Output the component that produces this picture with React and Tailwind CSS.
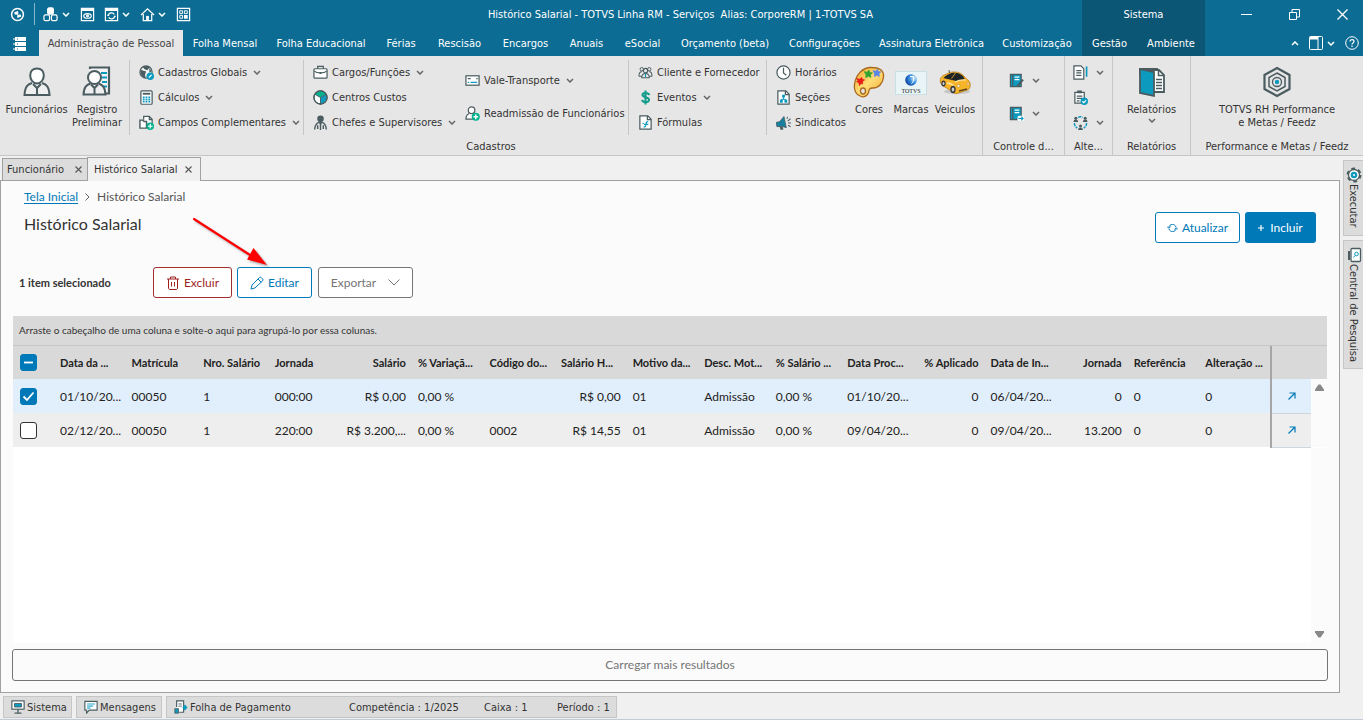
import React from "react";
import clsx from "clsx";

const INK = "#4a5c60";
const TEAL = "#0c9abe";
const GREEN = "#00b28e";

const Svg = ({ size = 15, box = 16, className, children }) => (
    <svg
        width={size}
        height={size}
        viewBox={`0 0 ${box} ${box}`}
        fill="none"
        stroke={INK}
        strokeWidth="1.3"
        className={clsx("shrink-0", className)}
        aria-hidden="true"
    >
        {children}
    </svg>
);

const Chevron = ({ className = "text-[#666666]", up = false }) => (
    <svg width="8" height="5" viewBox="0 0 8 5" fill="none" stroke="currentColor" strokeWidth="1.5" className={clsx("shrink-0", className)} aria-hidden="true">
        <path d={up ? "M1 4l3-3 3 3" : "M1 1l3 3 3-3"} />
    </svg>
);

/* ---------- ribbon icons ---------- */

const PersonIcon = () => (
    <Svg size={32} box={32}>
        <g strokeWidth="2" fill="#fff">
            <path d="M11 17c-4 1.500-7 3-7.500 12h25c-.5-9-3.500-10.500-7.500-12" fill="#efefef" />
            <path d="M12 18l4 4 4-4M16 22v6" fill="none" />
            <path d="M16 2.500c4.500 0 6.800 3 6.800 7s-2.800 8-6.800 8-6.800-4-6.800-8 2.300-7 6.800-7z" />
        </g>
    </Svg>
);

const RegistryIcon = () => (
    <Svg size={32} box={32}>
        <path d="M9 3V1.500h19v26h-6" strokeWidth="2.200" fill="#f4f4f4" />
        <path d="M20 7h6M21 11.500h5M21 16h5M22 20.500h4" stroke={TEAL} strokeWidth="2" />
        <g strokeWidth="2">
            <path d="M9.500 17.500c-4 1.500-6.500 3-7 11h22c-.5-8-3-9.500-7-11" fill="#efefef" />
            <path d="M10 18.500l3.500 3.500 3.500-3.500M13.500 22v6" />
            <circle cx="13.500" cy="11.500" r="6.500" fill="#fff" />
        </g>
    </Svg>
);

const GlobeIcon = () => (
    <Svg>
        <circle cx="7.500" cy="7.500" r="6.500" fill="#f4f4f4" />
        <path d="M1.500 5c3 .5 3.500 1.500 5.500 1.500 1 1.500-.5 2.500-.5 4s.5 2 .5 3.500c-3-.500-6-4-5.500-9zM4 2c2-1.500 6-1 7.500 0L9 5.500 6 4.500z" fill={INK} stroke="none" />
        <path d="M11 3l2.500 4-2.500 1z" fill={INK} stroke="none" />
        <circle cx="12" cy="12" r="4" fill={TEAL} stroke="none" />
        <path d="M10.500 13.500l3-3" stroke="#fff" />
    </Svg>
);

const CalculatorIcon = () => (
    <Svg>
        <rect x="2" y="1" width="12" height="14.200" rx="1" fill="#fff" />
        <rect x="4" y="3" width="8" height="2" fill={INK} stroke="none" />
        <path d="M5 7v6.500M8 7v6.500M11 7v6.500" stroke={TEAL} strokeWidth="2" strokeDasharray="1.800 .5" />
    </Svg>
);

const FieldsIcon = () => (
    <Svg>
        <path d="M5 5V1.500h6l3 3V10M11 1.500V5h3" fill="#fff" />
        <path d="M1 5.500h3l1.500 1.500H8V14H1z" fill="#fff" strokeWidth="1.500" />
        <circle cx="12" cy="12" r="4" fill={GREEN} stroke="none" />
        <path d="M12 9.500v5M9.500 12h5" stroke="#fff" />
    </Svg>
);

const BriefcaseIcon = () => (
    <Svg>
        <path d="M5 4V1.500h6V4" />
        <rect x="1" y="4" width="14" height="10" rx="1" fill="#fff" />
        <path d="M1.500 6.500C4 9 12 9 14.500 6.500" />
        <path d="M7 8.500h2" strokeWidth="2" />
    </Svg>
);

const PieIcon = () => (
    <Svg>
        <circle cx="8" cy="8" r="7" fill="#fff" />
        <path d="M8 8L2 4.500C5 0 11 0 14 4.500z" fill={GREEN} stroke="none" />
        <path d="M8 8l6-3.500c2 4 0 9-6 10.300z" fill={TEAL} stroke="none" />
        <circle cx="8" cy="8" r="7" />
        <path d="M8 8v7M8 8L2 4.500M8 8l6-3.500" strokeWidth="1" />
    </Svg>
);

const SupervisorIcon = () => (
    <Svg>
        <circle cx="8" cy="4" r="3.500" fill={INK} stroke="none" />
        <path d="M8 7v9M6.500 7.500C3 9 2 11 1.800 15.500M9.500 7.500c3.500 1.500 4.500 3.500 4.700 8M5 11v4M11 11v4" strokeWidth="1.500" />
        <path d="M6 7h4l-2 5z" fill={INK} stroke="none" />
    </Svg>
);

const TicketIcon = () => (
    <Svg>
        <rect x="1" y="3" width="14" height="10" fill="#fff" />
        <path d="M3 6h3M12 6h1.500" strokeWidth="1.500" />
        <path d="M3 10h1.500M6 10h7" stroke={TEAL} strokeWidth="1.500" />
    </Svg>
);

const RehireIcon = () => (
    <Svg>
        <circle cx="7" cy="4.500" r="3.500" fill="#fff" />
        <path d="M4.500 8C2 9 1 11 1 14h8" fill="#fff" />
        <circle cx="11.500" cy="11.500" r="4.300" fill={GREEN} stroke="none" />
        <path d="M11.500 9v5M9 11.500h5" stroke="#fff" strokeWidth="1.500" />
    </Svg>
);

const PeopleIcon = () => (
    <Svg>
        <circle cx="8" cy="6" r="2.300" />
        <circle cx="4" cy="4.500" r="1.800" strokeWidth="1" />
        <circle cx="12" cy="4.500" r="1.800" strokeWidth="1" />
        <path d="M4 13.500c0-3 1.500-4.500 4-4.500s4 1.500 4 4.500zM1 12c0-3 .5-4.500 3-5M15 12c0-3-.5-4.500-3-5M1 12h3M12 12h3" strokeWidth="1.100" />
        <path d="M8 9v4" stroke={TEAL} />
    </Svg>
);

const DollarIcon = () => (
    <Svg>
        <path d="M12 5.500C11.500 3 5 2 4.800 5c0 3.500 7 2 7 5.500 0 3.500-7 3-7.500 0M8 .5v15" stroke="#139c8c" strokeWidth="2.200" />
    </Svg>
);

const FormulaIcon = () => (
    <Svg>
        <path d="M2 1h8.500L14 4.500V15H2z" fill="#fff" />
        <path d="M10 1v4h4" />
        <path d="M11 7.500c-1.500-.8-2.200 0-2.400 1.500l-.4 2c-.3 1.500-.9 2-2.200 1.500M6.500 10h4.500" stroke={TEAL} strokeWidth="1.300" />
        <circle cx="5.500" cy="9" r=".8" fill={TEAL} stroke="none" />
    </Svg>
);

const ClockIcon = () => (
    <Svg>
        <circle cx="8" cy="8" r="7" fill="#fff" />
        <path d="M8 3v5.500l3 2.500" />
    </Svg>
);

const SectionIcon = () => (
    <Svg>
        <path d="M2 1h8.500L14 4.500V15H2z" fill="#fff" />
        <path d="M10 1v4h4" />
        <path d="M8 7v3M5.500 12v-2h5v2" stroke={TEAL} strokeWidth="1" />
        <path d="M6.500 5h3v3h-3zM4.200 10.500h3v3h-3zM9 10.500h3v3H9z" fill={TEAL} stroke="none" />
    </Svg>
);

const MegaphoneIcon = () => (
    <Svg>
        <path d="M0 8l4-1L8.500 1.500l2.500 12L6 12l-5 .5z" fill="#16819f" stroke={INK} strokeWidth=".8" />
        <path d="M4 12l3 .5.500 3H5z" fill={INK} strokeWidth=".5" />
        <path d="M11.500 4l1-2M12.500 6.500l3-2.500M13 8.500h3M13 11l2.500 1.500" strokeWidth="1.100" />
    </Svg>
);

const PaletteIcon = () => (
    <Svg size={32} box={32}>
        <defs>
            <linearGradient id="palette" x1="0" y1="0" x2="1" y2="1">
                <stop offset="0" stopColor="#f5a32a" />
                <stop offset=".5" stopColor="#fedd78" />
                <stop offset="1" stopColor="#f3a52e" />
            </linearGradient>
        </defs>
        <path
            d="M18 1.500c9 0 13 3 12.500 9.500C30 17 26 22 20 22c-4 0-4 2-4.500 4.500C14.500 30 11 31.500 8 30.500 3 29 .500 24 1.500 18 3 9 9 1.500 18 1.500z"
            fill="url(#palette)"
            stroke="#a8681c"
        />
        <ellipse cx="10" cy="25" rx="2.500" ry="3" fill="#e6e6e6" stroke="#a8681c" />
        <path d="M3.500 12.500l3 .7 2.300-1.700.5 2 2.200.3-2 2 .2 2-1.800-.3-1.400 2-.8-3-2-.7 1.200-1.300z" fill="#ea1c15" stroke="#d9251d" strokeWidth=".8" />
        <path d="M11 5.500l3 .7L16 4l.8 2.500 2.700.3-2 2 .4 2.700-2.600-1.200-2.600 1.400.3-3z" fill="#2fa530" stroke="#2fa530" strokeWidth=".6" />
        <path d="M20 4.500l2.700.7L24.500 3l.8 2.500 2.700.3-2 2 .4 2.700-2.600-1.200-2.600 1.400.3-3z" fill="#5a84e8" stroke="#5a84e8" strokeWidth=".6" />
    </Svg>
);

const BrandIcon = () => (
    <svg width="32" height="32" viewBox="0 0 32 32" className="shrink-0" aria-hidden="true">
        <defs>
            <radialGradient id="orb" cx=".75" cy=".35" r=".8">
                <stop offset="0" stopColor="#d9f0ff" />
                <stop offset=".45" stopColor="#3b93e0" />
                <stop offset="1" stopColor="#0b3c9c" />
            </radialGradient>
        </defs>
        <rect x=".5" y="5.500" width="31" height="23" fill="#e8f4f6" stroke="#c9dfe6" />
        <circle cx="16" cy="14" r="5.800" fill="url(#orb)" />
        <path d="M15 10.500h3.500v3c0 2-.5 3-2 4" fill="none" stroke="#fff" strokeWidth="1" />
        <text x="16" y="26.500" textAnchor="middle" fontSize="6" fontFamily="'Liberation Serif', serif" fill="#222">TOTVS</text>
    </svg>
);

const CarIcon = () => (
    <svg width="32" height="32" viewBox="0 0 32 32" className="shrink-0" aria-hidden="true">
        <ellipse cx="18" cy="25.500" rx="13" ry="2.500" fill="#c6c6c6" />
        <path d="M1.500 12.500C3 9.500 5 9 7.500 8 12 5 20 5 24.500 9.500l3 3.500c3 1.500 4 4 3.700 7-.200 2.500-1.200 3.500-3 4L18 27.500c-2 .5-3 0-4-1.500l-9-5.500c-3-1.500-4.500-5-3.500-8z" fill="#f8b52a" stroke="#b47710" strokeWidth=".7" />
        <path d="M4.500 12.500c1-2.500 4-4 8-5.500 4-1 8.500 0 11.500 3l2 3.500-10 1.500z" fill="#1f2427" />
        <path d="M12.500 12.500l4-5.500M5 12.700l11 2.500" stroke="#f8b52a" fill="none" strokeWidth=".8" />
        <path d="M16 16c4-2 7-2.500 10.500-2M8 17c5 .5 6.500 2 8 4.500" stroke="#fde7a6" strokeWidth="1.300" fill="none" />
        <ellipse cx="4.500" cy="17.500" rx="2.200" ry="3" fill="#3a3a3a" />
        <ellipse cx="14" cy="23.500" rx="2.700" ry="3.700" fill="#3a3a3a" />
        <ellipse cx="14" cy="23.500" rx="1.300" ry="2" fill="#d0d0d0" />
        <ellipse cx="4.500" cy="17.500" rx="1" ry="1.600" fill="#d0d0d0" />
        <circle cx="19.500" cy="20" r="1.500" fill="#fff7dc" stroke="#b47710" strokeWidth=".5" />
        <circle cx="29" cy="18" r="1.200" fill="#fff7dc" stroke="#b47710" strokeWidth=".5" />
        <path d="M20 25l8-2" stroke="#5f4a15" strokeWidth="1.500" />
        <path d="M10 4l.500 3" stroke="#333" strokeWidth=".8" />
    </svg>
);

const BookEditIcon = () => (
    <Svg>
        <path d="M1.500 1.500h11.500v13H1.500z" fill={TEAL} />
        <path d="M4 1.500v13" />
        <path d="M6 4.500h5M6 7h5" stroke="#fff" />
        <path d="M9 14l6-7" strokeWidth="2.200" />
    </Svg>
);

const BookArrowIcon = () => (
    <Svg>
        <path d="M1.500 1.500h11.500v13H1.500z" fill={TEAL} />
        <path d="M4 1.500v13" />
        <path d="M6 4.500h5M6 7h5" stroke="#fff" />
        <rect x="9" y="10.500" width="7" height="5.500" rx="2" fill="#fff" stroke="none" />
        <path d="M10 13.300h5M13 11.300l2 2-2 2" stroke={TEAL} strokeWidth="1.200" />
    </Svg>
);

const DocumentIcon = () => (
    <Svg>
        <path d="M1 1h7.500L11.500 4v11H1z" fill="#fff" />
        <path d="M3.500 6h5.500M3.500 8.500h5.500M3.500 11h5.500" />
        <path d="M14.500 1.500v11" stroke={TEAL} strokeWidth="1.800" />
    </Svg>
);

const ClipboardIcon = () => (
    <Svg>
        <path d="M2 2.500h10V14H2z" fill="#fff" />
        <path d="M4.500 2h5" strokeWidth="3" />
        <path d="M4 6.500h6M4 9h6M4 11.500h3" />
        <circle cx="12" cy="12" r="4" fill={TEAL} stroke="none" />
        <path d="M10 12l1.500 1.500L14 11" stroke="#fff" />
    </Svg>
);

const CycleIcon = () => (
    <Svg>
        <path d="M5.500 2.500c1.500-.8 3.500-.8 5 0M14.500 8.500c0 2.500-1 4-3 5.500M1.500 8.500c0 2.500 1 4 3 5.500" stroke={TEAL} strokeWidth="1.600" strokeDasharray="3.500 1" />
        <path d="M.5 7.500c0-3.500 5-3.500 5 0zM10.500 7.500c0-3.500 5-3.500 5 0zM5.500 16c0-3.500 5-3.500 5 0z" fill={INK} stroke="none" />
        <circle cx="3" cy="3.500" r="1.600" fill={INK} stroke="none" />
        <circle cx="13" cy="3.500" r="1.600" fill={INK} stroke="none" />
        <circle cx="8" cy="11.800" r="1.600" fill={INK} stroke="none" />
    </Svg>
);

const ReportsIcon = () => (
    <Svg size={32} box={32}>
        <path d="M4 3h17v5H4z" fill="#3b4c52" strokeWidth="1.800" />
        <path d="M16 4h7l5 5v17H16z" fill="#fff" strokeWidth="1.800" />
        <path d="M22.500 4v5.500H28" strokeWidth="1.500" />
        <path d="M20 13.500h6M20 16.500h6M20 19.500h6M20 22.500h6" />
        <path d="M4 3l14 3v24L4 27z" fill={TEAL} strokeWidth="1.800" />
    </Svg>
);

const HexIcon = () => (
    <Svg size={32} box={32}>
        <path d="M16 2l12.500 7v14L16 30 3.500 23V9z" strokeWidth="2.200" />
        <path d="M16 7l8 4.500v9L16 25l-8-4.500v-9z" strokeWidth="1.500" />
        <circle cx="16" cy="16" r="4.500" />
        <circle cx="16" cy="16" r="2.200" fill={TEAL} stroke="none" />
    </Svg>
);

/* ---------- title bar ---------- */

const White = ({ size = 15, children }) => (
    <svg width={size} height={size} viewBox="0 0 16 16" fill="none" stroke="#fff" strokeWidth="1.300" className="shrink-0" aria-hidden="true">
        {children}
    </svg>
);

const QuickAccess = () => (
    <div className="flex items-center h-7 text-white">
        <button type="button" aria-label="TOTVS" className="ml-2.5">
            <White>
                <circle cx="8" cy="8" r="6.300" strokeWidth="1.600" />
                <path d="M4.500 5.500l4-1.200.5 2.500-1 1.500 3.500-.3.500 2.200-4 1.500-.5-2.200 1-1.700-3.500.3z" fill="#fff" stroke="none" />
            </White>
        </button>
        <span className="w-px h-[22px] ml-[9px] bg-white/50"></span>
        <button type="button" aria-label="Módulos" className="flex items-center gap-1 ml-2">
            <White>
                <rect x="5" y="1" width="6" height="6.500" rx="1.500" fill="#fff" />
                <rect x="1" y="8.500" width="6" height="6" rx="1.500" />
                <rect x="9" y="8.500" width="6" height="6" rx="1.500" />
            </White>
            <Chevron className="text-white" />
        </button>
        <button type="button" aria-label="Visualizar" className="ml-2.5">
            <White>
                <path d="M1.500 1.500h13v13h-13z" />
                <path d="M1.500 3h13" strokeWidth="2.500" />
                <ellipse cx="8" cy="9.500" rx="4" ry="2.500" />
                <circle cx="8" cy="9.500" r="1" />
            </White>
        </button>
        <button type="button" aria-label="Atualizar janela" className="flex items-center gap-[3px] ml-[9px]">
            <White>
                <path d="M1.500 1.500h13v13h-13z" />
                <path d="M1.500 3h13" strokeWidth="2.500" />
                <path d="M4.500 9c.5-3 5-4 6.500-1M11.500 10c-.5 3-5 3.500-6.500 1M3.500 9h2M10.500 10h2" />
            </White>
            <Chevron className="text-white" />
        </button>
        <button type="button" aria-label="Início" className="flex items-center gap-[3px] ml-2.5">
            <White>
                <path d="M1 8.500L8 2l7 6.500M3.500 7.500v7h9v-7" />
                <path d="M6.500 9.500h3v5h-3z" fill="#fff" stroke="none" />
            </White>
            <Chevron className="text-white" />
        </button>
        <button type="button" aria-label="Painel" className="ml-2.5">
            <White>
                <path d="M1.500 1.500h13v13h-13z" />
                <path d="M4 4h3v3H4zM9 4h3v3H9zM4 9h3v3H4z" strokeWidth="1" />
                <path d="M8.500 8.500h4v4h-4z" fill="#fff" stroke="none" />
            </White>
        </button>
    </div>
);

const MENU = [
    ["Folha Mensal", "w-[84px]"],
    ["Folha Educacional", "w-[108px]"],
    ["Férias", "w-[52px]"],
    ["Rescisão", "w-[65px]"],
    ["Encargos", "w-[67px]"],
    ["Anuais", "w-[55px]"],
    ["eSocial", "w-[57px]"],
    ["Orçamento (beta)", "w-[108px]"],
    ["Configurações", "w-[91px]"],
    ["Assinatura Eletrônica", "w-[123px]"],
    ["Customização", "w-[88px]"],
];

const Header = () => (
    <header className="flex bg-[#0c6c94] text-white">
        <div className="flex-1 min-w-0">
            <div className="flex items-center h-7">
                <QuickAccess />
                <h1 className="flex-1 pl-[88px] text-center whitespace-pre">Histórico Salarial - TOTVS Linha RM - Serviços  Alias: CorporeRM | 1-TOTVS SA</h1>
            </div>
            <nav className="flex h-7">
                <button type="button" aria-label="Menu principal" className="w-[39px] flex items-center justify-center pt-1">
                    <svg width="14" height="14" viewBox="0 0 14 14" aria-hidden="true">
                        <path d="M2 0h11v4H2zM2 5h11v4H2zM2 10h11v4H2z" fill="#fff" />
                        <path d="M0 2h4M0 7h4M0 12h4" stroke="#fff" />
                        <path d="M4 2h1M4 7h1M4 12h1" stroke="#0c6c94" />
                    </svg>
                </button>
                <button type="button" className="w-36 mt-0.5 bg-[#e6e6e6] text-[#444444]">Administração de Pessoal</button>
                {MENU.map(([label, width]) => (
                    <button type="button" key={label} className={clsx("whitespace-nowrap pt-0.5", width)}>{label}</button>
                ))}
            </nav>
        </div>
        <div className="w-[123px] bg-[#0c5675]">
            <div className="flex items-center justify-center h-7">Sistema</div>
            <div className="flex h-7">
                <button type="button" className="w-[55px] pt-0.5">Gestão</button>
                <button type="button" className="flex-1 pt-0.5">Ambiente</button>
            </div>
        </div>
        <div className="w-[158px]">
            <div className="flex items-center justify-end h-7 gap-[37px] pr-[15px]">
                <button type="button" aria-label="Minimizar">
                    <svg width="11" height="11" stroke="#fff" fill="none"><path d="M0 5.500h11" /></svg>
                </button>
                <button type="button" aria-label="Restaurar">
                    <svg width="11" height="11" stroke="#fff" fill="none"><path d="M.5 3.500h7v7h-7zM3 3V.5h7.500V8H8" /></svg>
                </button>
                <button type="button" aria-label="Fechar">
                    <svg width="11" height="11" stroke="#fff" strokeWidth="1.300" fill="none"><path d="M.5.5l10 10M10.500.5l-10 10" /></svg>
                </button>
            </div>
            <div className="flex items-center justify-end h-7 pt-0.5 pr-1">
                <button type="button" aria-label="Recolher faixa"><Chevron up className="text-white" /></button>
                <button type="button" aria-label="Layout" className="flex items-center gap-1 ml-2.5">
                    <svg width="14" height="14" stroke="#fff" fill="none" aria-hidden="true">
                        <rect x=".5" y=".5" width="13" height="13" rx="1" />
                        <path d="M1 2h8" strokeWidth="3" />
                        <path d="M9 1v12" />
                    </svg>
                    <Chevron className="text-white" />
                </button>
                <button type="button" aria-label="Ajuda" className="ml-2.5">
                    <svg width="14" height="14" viewBox="0 0 14 14" stroke="#fff" fill="none" aria-hidden="true">
                        <circle cx="7" cy="7" r="6.300" />
                        <path d="M5 5.500C5 3 9 3 9 5.500 9 7 7 7 7 8.500M7 9.500V11" strokeWidth="1.200" />
                    </svg>
                </button>
            </div>
        </div>
    </header>
);

/* ---------- ribbon ---------- */

const SmallItem = ({ icon: Icon, label, menu }) => (
    <button type="button" className="flex items-center h-[25px] gap-1 whitespace-nowrap">
        <Icon />
        <span>{label}</span>
        {menu && <Chevron className="text-[#666666] ml-0.5" />}
    </button>
);

const LargeItem = ({ icon: Icon, children, className }) => (
    <button type="button" className={clsx("flex flex-col items-center pt-1.5 leading-[13px] whitespace-nowrap", className)}>
        <Icon />
        <span className="mt-[5px]">{children}</span>
    </button>
);

const IconItem = ({ icon: Icon, label, menu }) => (
    <button type="button" aria-label={label} className="flex items-center h-[25px] gap-2">
        <Icon />
        {menu && <Chevron />}
    </button>
);

const Separator = () => <span className="w-px h-[75px] bg-[#c6c6c6]"></span>;

const Group = ({ title, className, children }) => (
    <section className={clsx("flex flex-col pt-1 border-r border-[#c6c6c6] last:border-r-0", className)}>
        <div className="flex flex-1">{children}</div>
        <h2 className="text-center leading-4 whitespace-nowrap">{title}</h2>
    </section>
);

const Ribbon = () => (
    <div className="flex h-[100px] bg-[#e6e6e6] border-b border-[#c6c6c6] text-[#333333]">
        <Group title="Cadastros" className="w-[983px]">
            <LargeItem icon={PersonIcon} className="w-[73px]">Funcionários</LargeItem>
            <LargeItem icon={RegistryIcon} className="w-12 mr-2">Registro<br />Preliminar</LargeItem>
            <Separator />
            <div className="flex flex-col w-[173px] pl-[9px]">
                <SmallItem icon={GlobeIcon} label="Cadastros Globais" menu />
                <SmallItem icon={CalculatorIcon} label="Cálculos" menu />
                <SmallItem icon={FieldsIcon} label="Campos Complementares" menu />
            </div>
            <Separator />
            <div className="flex flex-col w-[153px] pl-[9px]">
                <SmallItem icon={BriefcaseIcon} label="Cargos/Funções" menu />
                <SmallItem icon={PieIcon} label="Centros Custos" />
                <SmallItem icon={SupervisorIcon} label="Chefes e Supervisores" menu />
            </div>
            <div className="flex flex-col gap-2 w-[171px] pt-2 pl-2">
                <SmallItem icon={TicketIcon} label="Vale-Transporte" menu />
                <SmallItem icon={RehireIcon} label="Readmissão de Funcionários" />
            </div>
            <Separator />
            <div className="flex flex-col w-[137px] pl-[9px]">
                <SmallItem icon={PeopleIcon} label="Cliente e Fornecedor" />
                <SmallItem icon={DollarIcon} label="Eventos" menu />
                <SmallItem icon={FormulaIcon} label="Fórmulas" />
            </div>
            <Separator />
            <div className="flex flex-col w-20 pl-[9px]">
                <SmallItem icon={ClockIcon} label="Horários" />
                <SmallItem icon={SectionIcon} label="Seções" />
                <SmallItem icon={MegaphoneIcon} label="Sindicatos" />
            </div>
            <LargeItem icon={PaletteIcon} className="w-11">Cores</LargeItem>
            <LargeItem icon={BrandIcon} className="w-10">Marcas</LargeItem>
            <LargeItem icon={CarIcon} className="w-12">Veiculos</LargeItem>
        </Group>
        <Group title="Controle d..." className="w-[82px]">
            <div className="flex flex-col gap-2 pt-2 pl-[26px]">
                <IconItem icon={BookEditIcon} label="Editar controle" menu />
                <IconItem icon={BookArrowIcon} label="Enviar controle" menu />
            </div>
        </Group>
        <Group title="Alte..." className="w-12">
            <div className="flex flex-col pl-2">
                <IconItem icon={DocumentIcon} label="Alterar documento" menu />
                <IconItem icon={ClipboardIcon} label="Conferir" />
                <IconItem icon={CycleIcon} label="Transferir" menu />
            </div>
        </Group>
        <Group title="Relatórios" className="w-[78px]">
            <LargeItem icon={ReportsIcon} className="w-full">
                <span className="flex flex-col items-center gap-0.5">Relatórios<Chevron /></span>
            </LargeItem>
        </Group>
        <Group title="Performance e Metas / Feedz" className="flex-1">
            <LargeItem icon={HexIcon} className="w-full">TOTVS RH Performance<br />e Metas / Feedz</LargeItem>
        </Group>
    </div>
);

/* ---------- documents ---------- */

const CloseMark = () => (
    <svg width="7" height="7" viewBox="0 0 7 7" stroke="#5a5a5a" strokeWidth="1.200" aria-hidden="true">
        <path d="M.5.5l6 6M6.500.5l-6 6" />
    </svg>
);

const DocTabs = () => (
    <div className="flex items-end h-[25px] pl-0.5 text-[#333333] border-b border-[#a0a0a0]">
        <div className="flex items-center justify-between w-[85px] h-[22px] pl-1 pr-[5px] bg-[#dcdcdc] border border-b-0 border-r-0 border-[#a0a0a0]">
            <button type="button">Funcionário</button>
            <button type="button" aria-label="Fechar Funcionário"><CloseMark /></button>
        </div>
        <div className="flex items-center justify-between w-[114px] h-6 -mb-px pl-1.5 pr-2 bg-[#f0f0f0] border border-b-0 border-[#a0a0a0]">
            <button type="button">Histórico Salarial</button>
            <button type="button" aria-label="Fechar Histórico Salarial"><CloseMark /></button>
        </div>
    </div>
);

const Check = ({ label, state }) => (
    <label className="grid w-[17px] h-[17px]">
        <input
            type="checkbox"
            aria-label={label}
            defaultChecked={state !== "off"}
            className="col-start-1 row-start-1 appearance-none w-[17px] h-[17px] rounded-[3px] border border-[#333333] bg-white checked:bg-[#0079b8] checked:border-[#0079b8]"
        />
        {state !== "off" && (
            <svg viewBox="0 0 17 17" className="col-start-1 row-start-1 pointer-events-none" fill="none" stroke="#fff" strokeWidth="1.800" aria-hidden="true">
                <path d={state === "mixed" ? "M4 8.500h9" : "M3.500 8.500l3.500 3.500 6.500-7.500"} />
            </svg>
        )}
    </label>
);

const COLUMNS = [
    { title: "Data da ..." },
    { title: "Matrícula" },
    { title: "Nro. Salário" },
    { title: "Jornada" },
    { title: "Salário", right: true },
    { title: "% Variaçã..." },
    { title: "Código do..." },
    { title: "Salário H...", right: true },
    { title: "Motivo da..." },
    { title: "Desc. Mot..." },
    { title: "% Salário ..." },
    { title: "Data Proc..." },
    { title: "% Aplicado", right: true },
    { title: "Data de In..." },
    { title: "Jornada", right: true },
    { title: "Referência" },
    { title: "Alteração ..." },
];

const ROWS = [
    ["01/10/20...", "00050", "1", "000:00", "R$ 0,00", "0,00 %", "", "R$ 0,00", "01", "Admissão", "0,00 %", "01/10/20...", "0", "06/04/20...", "0", "0", "0"],
    ["02/12/20...", "00050", "1", "220:00", "R$ 3.200,...", "0,00 %", "0002", "R$ 14,55", "01", "Admissão", "0,00 %", "09/04/20...", "0", "09/04/20...", "13.200", "0", "0"],
];

const ScrollArrow = ({ down = false }) => (
    <button type="button" aria-label={down ? "Rolar para baixo" : "Rolar para cima"} className="flex items-center justify-center w-4 h-[17px]">
        <svg width="9" height="7" viewBox="0 0 9 7" aria-hidden="true">
            <path d={down ? "M0 0h9v1.500L5.500 6.500h-2L0 1.500z" : "M0 7h9V5.500L5.500.5h-2L0 5.500z"} fill="#888888" />
        </svg>
    </button>
);

const Grid = () => (
    <div className="flex flex-col flex-1 mx-px bg-white">
        <div className="h-[30px] pl-1.5 leading-7 text-[10px] text-[#333333] bg-[#d9d9d9] border-b border-[#c6c6c6]">
            Arraste o cabeçalho de uma coluna e solte-o aqui para agrupá-lo por essa colunas.
        </div>
        <table className="w-full table-fixed text-[12px] text-[#222222]">
            <colgroup>
                <col className="w-[41px]" />
                {COLUMNS.map((_, i) => <col key={i} />)}
                <col className="w-10" />
                <col className="w-4" />
            </colgroup>
            <thead>
                <tr className="h-[33px] bg-[#d9d9d9] text-[11px]">
                    <th className="pl-[7px]"><Check label="Selecionar todos" state="mixed" /></th>
                    {COLUMNS.map((col, i) => (
                        <th key={i} className={clsx("px-1.5 whitespace-nowrap font-bold", col.right && col.title !== "Salário H..." ? "text-right" : "text-left")}>{col.title}</th>
                    ))}
                    <th className="border-l-2 border-[#a6a6a6]"></th>
                    <th></th>
                </tr>
            </thead>
            <tbody>
                {ROWS.map((row, r) => (
                    <tr key={r} className={clsx("h-[34px]", r === 0 ? "bg-[#e1eefb]" : "bg-[#eeeeee]")}>
                        <td className="pl-[7px]"><Check label={`Selecionar linha ${r + 1}`} state={r === 0 ? "on" : "off"} /></td>
                        {row.map((cell, i) => (
                            <td key={i} className={clsx("px-1.5 whitespace-nowrap", COLUMNS[i].right && "text-right")}>{cell}</td>
                        ))}
                        <td className="border-l-2 border-l-[#a6a6a6] border-b border-b-[#cfd6dc]">
                            <a href="#detalhe" aria-label="Abrir detalhe" className="flex justify-center">
                                <svg width="8" height="8" viewBox="0 0 8 8" fill="none" stroke="#0079b8" strokeWidth="1.200" aria-hidden="true">
                                    <path d="M.5 7.500l6-6M1.500 1h5.500v5.500" />
                                </svg>
                            </a>
                        </td>
                        <td className="bg-[#fbfbfb] align-top">{r === 0 && <ScrollArrow />}</td>
                    </tr>
                ))}
            </tbody>
        </table>
        <div className="flex flex-1 items-end justify-end">
            <div className="flex items-end self-stretch bg-[#fbfbfb]"><ScrollArrow down /></div>
        </div>
    </div>
);

const Page = () => (
    <main className="relative flex flex-col flex-1 px-[11px] pb-[11px] bg-[#fbfbfb] border border-t-0 border-[#a0a0a0] font-['Lato',sans-serif] text-[12px]">
        <div className="flex justify-between pl-3 pr-3">
            <div>
                <nav className="flex items-center gap-[7px] pt-2 leading-4 text-[#555555]">
                    <a href="#inicio" className="text-[#0079b8] underline underline-offset-2">Tela Inicial</a>
                    <svg width="5" height="8" viewBox="0 0 5 8" fill="none" stroke="#666" aria-hidden="true"><path d="M.5.5L4 4 .5 7.500" /></svg>
                    <span>Histórico Salarial</span>
                </nav>
                <h2 className="mt-[7px] text-[16px] leading-6 text-[#333333]">Histórico Salarial</h2>
            </div>
            <div className="flex gap-[5px] pt-[31px]">
                <button type="button" className="flex items-center justify-center gap-1 w-[85px] h-[31px] rounded-[3px] border border-[#0079b8] bg-white text-[#0079b8]">
                    <svg width="11" height="10" viewBox="0 0 11 10" fill="none" stroke="currentColor" aria-hidden="true">
                        <path d="M1.800 4.500C2.500.5 8 .5 9 4M9.200 5.500C8.500 9.500 3 9.500 2 6M0 3.500l1.800 1.800 1.800-1.800M7.400 6.500l1.800-1.800L11 6.500" />
                    </svg>
                    Atualizar
                </button>
                <button type="button" className="flex items-center justify-center gap-1.5 w-[71px] h-[31px] rounded-[3px] bg-[#0079b8] text-white">
                    <svg width="6" height="6" viewBox="0 0 6 6" stroke="currentColor" strokeWidth="1.200" aria-hidden="true"><path d="M3 0v6M0 3h6" /></svg>
                    Incluir
                </button>
            </div>
        </div>
        <div className="flex items-center mt-6 pl-[7px]">
            <span className="w-[134px] text-[11px] font-bold text-[#333333]">1 item selecionado</span>
            <button type="button" className="flex items-center justify-center gap-1 w-[79px] h-[31px] rounded-[3px] border border-[#a32c2c] bg-white text-[#a01f1f]">
                <svg width="14" height="14" viewBox="0 0 14 14" fill="none" stroke="currentColor" aria-hidden="true">
                    <path d="M1 3h12M4.500 3V1h5v2M2.500 3v9c0 1 .5 1.500 1.500 1.500h6c1 0 1.500-.5 1.500-1.500V3M5.500 6v4.500M8.500 6v4.500" />
                </svg>
                Excluir
            </button>
            <button type="button" className="flex items-center justify-center gap-1 ml-[5px] w-[75px] h-[31px] rounded-[3px] border border-[#0079b8] bg-white text-[#0079b8]">
                <svg width="14" height="14" viewBox="0 0 14 14" fill="none" stroke="currentColor" aria-hidden="true">
                    <path d="M1 13l1-4L9.500 1.500c.5-.5 1.200-.5 1.700 0L12.700 3c.5.5.5 1.200 0 1.700L5 12zM8 3l3.200 3.200" />
                </svg>
                Editar
            </button>
            <button type="button" className="flex items-center justify-center gap-3 ml-1.5 w-[95px] h-[31px] rounded-[3px] border border-[#757575] bg-white text-[#757575]">
                Exportar
                <svg width="12" height="7" viewBox="0 0 12 7" fill="none" stroke="currentColor" aria-hidden="true"><path d="M.5.5L6 6 11.500.5" /></svg>
            </button>
        </div>
        <div className="flex flex-col flex-1 mt-[18px]">
            <Grid />
        </div>
        <button type="button" className="h-8 mt-1.5 pb-px rounded-[3px] border border-[#757575] text-[#757575]">Carregar mais resultados</button>
        <svg className="absolute left-[190px] top-[34px] pointer-events-none drop-shadow-[2px_2px_1px_rgba(0,0,0,0.3)]" width="80" height="52" viewBox="0 0 80 52" aria-hidden="true">
            <path d="M3 4l56 36" stroke="#ff0000" strokeWidth="2.200" strokeLinecap="round" />
            <path d="M76 50L56 44.500 62.500 33z" fill="#ff0000" />
        </svg>
    </main>
);

const SideDock = () => (
    <aside className="w-5 ml-[3px] pt-[4px] flex flex-col gap-1 text-[#333333]">
        <button type="button" className="flex flex-col items-center w-5 h-[76px] pt-1.5 bg-[#dcdcdc] border border-r-0 border-[#c6c6c6]">
            <Svg size={16}>
                <circle cx="8" cy="8" r="6.300" strokeWidth="2.400" strokeDasharray="3.600 3" />
                <circle cx="8" cy="8" r="5.500" fill="#fff" />
                <circle cx="8" cy="8" r="3.300" fill={TEAL} stroke="none" />
                <circle cx="8" cy="8" r="1" fill="#fff" stroke="none" />
            </Svg>
            <span className="mt-px [writing-mode:vertical-rl] whitespace-nowrap">Executar</span>
        </button>
        <button type="button" className="flex flex-col items-center w-5 h-[129px] pt-1.5 bg-[#dcdcdc] border border-r-0 border-[#c6c6c6]">
            <Svg size={16}>
                <path d="M3 4v9" strokeWidth="2" />
                <rect x="5" y="1.500" width="9.500" height="13" rx="1" fill="#fff" />
                <circle cx="10.500" cy="7" r="1.800" stroke={TEAL} strokeWidth="1" />
                <path d="M9 8.500L7.500 10.500" stroke={TEAL} strokeWidth="1" />
            </Svg>
            <span className="mt-px [writing-mode:vertical-rl] whitespace-nowrap">Central de Pesquisa</span>
        </button>
    </aside>
);

const StatusBar = () => (
    <footer className="flex gap-1 h-[27px] pt-[3px] pb-px pl-[3px] text-[#333333] border-b border-[#c3cbd9]">
        <button type="button" className="flex items-center gap-0.5 w-[69px] pl-[7px] bg-[#dcdcdc] border border-[#c6c6c6]">
            <Svg size={14}>
                <rect x="1" y="1" width="14" height="9.500" fill="#fff" />
                <path d="M4 4h8v4H4z" fill={TEAL} strokeWidth="1" />
                <path d="M8 10.500V15M4 15h8" strokeWidth="1.500" />
            </Svg>
            Sistema
        </button>
        <button type="button" className="flex items-center gap-0.5 w-[86px] pl-[7px] bg-[#dcdcdc] border border-[#c6c6c6]">
            <Svg size={14}>
                <path d="M1 1.500h14v10H6L3 15v-3.500H1z" fill="#fff" />
                <path d="M3.500 4.500h9M3.500 7h7M3.500 9.300h4" stroke="#6ec3dc" strokeWidth="1.800" />
            </Svg>
            Mensagens
        </button>
        <div className="flex items-center w-[451px] pl-[7px] bg-[#dcdcdc] border border-[#c6c6c6] whitespace-nowrap">
            <button type="button" className="flex items-center gap-0.5 w-[175px]">
                <Svg size={14}>
                    <path d="M3 8V1h8v13H6" fill="#fff" />
                    <path d="M5 4.500h4M5 7h4" strokeWidth="1" />
                    <path d="M12.500 5l3 3.500-3 3.500-3-3.500z" fill={TEAL} stroke="none" />
                    <rect x="1" y="10" width="4" height="5" fill={TEAL} strokeWidth="1" />
                </Svg>
                Folha de Pagamento
            </button>
            <span className="w-[135px]">Competência : 1/2025</span>
            <span className="w-[73px]">Caixa : 1</span>
            <span>Período : 1</span>
        </div>
    </footer>
);

const App = () => {
    return (
        <div className="flex flex-col min-h-screen bg-[#f0f0f0] font-['DejaVu_Sans_Condensed','Noto_Sans',sans-serif] text-[11px] leading-[13px]">
            <Header />
            <Ribbon />
            <div className="flex flex-1">
                <div className="flex flex-col flex-1 min-w-0">
                    <DocTabs />
                    <Page />
                </div>
                <SideDock />
            </div>
            <StatusBar />
        </div>
    );
}

export default App
